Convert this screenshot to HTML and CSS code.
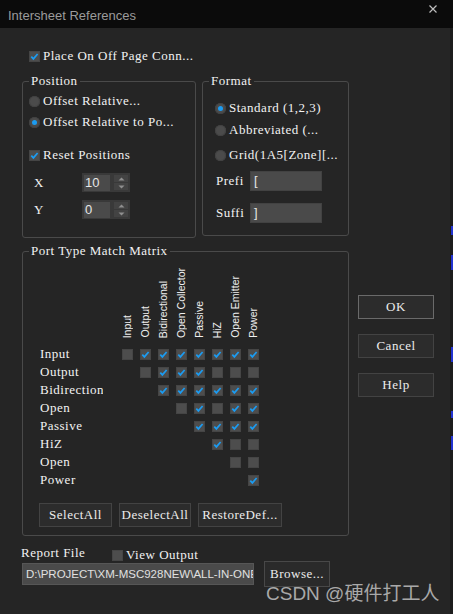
FILE: index.html
```html
<!DOCTYPE html>
<html>
<head>
<meta charset="utf-8">
<title>Intersheet References</title>
<link rel="stylesheet" href="styles.css">
</head>
<body>
<div class="screen">
  <div class="titlebar">
    <span class="title">Intersheet References</span>
    <svg class="close" viewBox="0 0 8 8"><path d="M0.5 0.5 L7.5 7.5 M7.5 0.5 L0.5 7.5" stroke="#bdbdbd" stroke-width="1.2" fill="none"/></svg>
  </div>
  <div class="below">
    <div class="window">
      <div class="content">
        <div class="check top-check"><span class="box on"></span><span>Place On Off Page Conn...</span></div>

        <div class="main">
          <div class="left">
            <div class="groups">
              <fieldset class="group pos">
                <legend>Position</legend>
                <div class="pos-inner">
                  <div class="check"><span class="radio"></span><span>Offset Relative...</span></div>
                  <div class="check gap7"><span class="radio on"></span><span>Offset Relative to Po...</span></div>
                  <div class="check gap19"><span class="box on"></span><span>Reset Positions</span></div>
                  <div class="spin-row gap11">
                    <span class="spin-label">X</span>
                    <div class="spin"><span class="spin-val">10</span><span class="spin-btns"><span class="spin-b"><svg viewBox="0 0 7 4"><path d="M0.5 3.5 L3.5 0.5 L6.5 3.5 Z" fill="#8f8f8f"/></svg></span><span class="spin-b"><svg viewBox="0 0 7 4"><path d="M0.5 0.5 L3.5 3.5 L6.5 0.5 Z" fill="#8f8f8f"/></svg></span></span></div>
                  </div>
                  <div class="spin-row gap8">
                    <span class="spin-label">Y</span>
                    <div class="spin"><span class="spin-val">0</span><span class="spin-btns"><span class="spin-b"><svg viewBox="0 0 7 4"><path d="M0.5 3.5 L3.5 0.5 L6.5 3.5 Z" fill="#8f8f8f"/></svg></span><span class="spin-b"><svg viewBox="0 0 7 4"><path d="M0.5 0.5 L3.5 3.5 L6.5 0.5 Z" fill="#8f8f8f"/></svg></span></span></div>
                  </div>
                </div>
              </fieldset>
              <fieldset class="group fmt">
                <legend>Format</legend>
                <div class="fmt-inner">
                  <div class="check"><span class="radio on"></span><span>Standard (1,2,3)</span></div>
                  <div class="check gap8"><span class="radio"></span><span>Abbreviated (...</span></div>
                  <div class="check gap11"><span class="radio"></span><span>Grid(1A5[Zone][...</span></div>
                  <div class="field-row gap9"><span class="field-label">Prefi</span><span class="field">[</span></div>
                  <div class="field-row gap12"><span class="field-label">Suffi</span><span class="field">]</span></div>
                </div>
              </fieldset>
            </div>

            <fieldset class="group matrix">
              <legend>Port Type Match Matrix</legend>
              <div class="grid">
                <div class="hd-empty"></div>
                <div class="hd"><span>Input</span></div>
                <div class="hd"><span>Output</span></div>
                <div class="hd"><span>Bidirectional</span></div>
                <div class="hd"><span>Open Collector</span></div>
                <div class="hd"><span>Passive</span></div>
                <div class="hd"><span>HiZ</span></div>
                <div class="hd"><span>Open Emitter</span></div>
                <div class="hd"><span>Power</span></div>

                <div class="rl">Input</div>
                <div class="cell"><span class="box"></span></div>
                <div class="cell"><span class="box on"></span></div>
                <div class="cell"><span class="box on"></span></div>
                <div class="cell"><span class="box on"></span></div>
                <div class="cell"><span class="box on"></span></div>
                <div class="cell"><span class="box on"></span></div>
                <div class="cell"><span class="box on"></span></div>
                <div class="cell"><span class="box on"></span></div>

                <div class="rl">Output</div>
                <div class="cell"></div>
                <div class="cell"><span class="box"></span></div>
                <div class="cell"><span class="box on"></span></div>
                <div class="cell"><span class="box on"></span></div>
                <div class="cell"><span class="box on"></span></div>
                <div class="cell"><span class="box"></span></div>
                <div class="cell"><span class="box"></span></div>
                <div class="cell"><span class="box"></span></div>

                <div class="rl">Bidirectional</div>
                <div class="cell"></div>
                <div class="cell"></div>
                <div class="cell"><span class="box on"></span></div>
                <div class="cell"><span class="box on"></span></div>
                <div class="cell"><span class="box on"></span></div>
                <div class="cell"><span class="box on"></span></div>
                <div class="cell"><span class="box on"></span></div>
                <div class="cell"><span class="box on"></span></div>

                <div class="rl">Open</div>
                <div class="cell"></div>
                <div class="cell"></div>
                <div class="cell"></div>
                <div class="cell"><span class="box"></span></div>
                <div class="cell"><span class="box on"></span></div>
                <div class="cell"><span class="box"></span></div>
                <div class="cell"><span class="box on"></span></div>
                <div class="cell"><span class="box on"></span></div>

                <div class="rl">Passive</div>
                <div class="cell"></div>
                <div class="cell"></div>
                <div class="cell"></div>
                <div class="cell"></div>
                <div class="cell"><span class="box on"></span></div>
                <div class="cell"><span class="box on"></span></div>
                <div class="cell"><span class="box on"></span></div>
                <div class="cell"><span class="box on"></span></div>

                <div class="rl">HiZ</div>
                <div class="cell"></div>
                <div class="cell"></div>
                <div class="cell"></div>
                <div class="cell"></div>
                <div class="cell"></div>
                <div class="cell"><span class="box on"></span></div>
                <div class="cell"><span class="box"></span></div>
                <div class="cell"><span class="box"></span></div>

                <div class="rl">Open</div>
                <div class="cell"></div>
                <div class="cell"></div>
                <div class="cell"></div>
                <div class="cell"></div>
                <div class="cell"></div>
                <div class="cell"></div>
                <div class="cell"><span class="box"></span></div>
                <div class="cell"><span class="box"></span></div>

                <div class="rl">Power</div>
                <div class="cell"></div>
                <div class="cell"></div>
                <div class="cell"></div>
                <div class="cell"></div>
                <div class="cell"></div>
                <div class="cell"></div>
                <div class="cell"></div>
                <div class="cell"><span class="box on"></span></div>
              </div>
              <div class="mx-buttons">
                <span class="btn b-sel">SelectAll</span>
                <span class="btn b-desel">DeselectAll</span>
                <span class="btn b-rest">RestoreDef...</span>
              </div>
            </fieldset>
          </div>

          <div class="right">
            <span class="btn dlg ok">OK</span>
            <span class="btn dlg">Cancel</span>
            <span class="btn dlg">Help</span>
          </div>
        </div>

        <div class="report">
          <div class="report-top">
            <span class="report-label">Report File</span>
            <div class="check view"><span class="box"></span><span>View Output</span></div>
          </div>
          <div class="report-bottom">
            <span class="path">D:\PROJECT\XM-MSC928NEW\ALL-IN-ONE\</span>
            <span class="btn browse">Browse...</span>
          </div>
        </div>
      </div>
      <div class="watermark">CSDN @硬件打工人</div>
    </div>
    <div class="edge"></div>
  </div>
</div>
</body>
</html>
```

FILE: styles.css
```css
html, body {
  margin: 0;
  padding: 0;
  background: #1c1c1c;
}

body {
  font-family: "Liberation Serif", "DejaVu Serif", serif;
  font-size: 13px;
  letter-spacing: 0.5px;
  color: #f2f2f2;
}

.screen {
  width: 453px;
  height: 614px;
  display: flex;
  flex-direction: column;
  overflow: hidden;
}

.titlebar {
  height: 28px;
  flex: none;
  background: #0b0b0b;
  display: flex;
  justify-content: space-between;
  align-items: flex-start;
}

.title {
  font: 13px/15px "Liberation Sans", Arial, sans-serif;
  letter-spacing: 0;
  color: #9b9b9b;
  margin: 8px 0 0 8px;
}

.close {
  width: 8px;
  height: 8px;
  margin: 5px 16px 0 0;
}

.below {
  flex: 1;
  display: flex;
}

.window {
  width: 450px;
  flex: none;
  background: #252525;
  position: relative;
}

.edge {
  flex: 1;
  background: linear-gradient(to right, #1d1d1d 0 1px, transparent 1px 3px),
    linear-gradient(to bottom,
    #1d1d1d 0 198px, #2233d0 198px 207px,
    #1d1d1d 207px 227px, #2233d0 227px 242px,
    #1d1d1d 242px 319px, #2233d0 319px 334px,
    #1d1d1d 334px 383px, #2233d0 383px 390px,
    #1d1d1d 390px 408px, #2233d0 408px 422px,
    #1d1d1d 422px);
}

.content {
  padding: 21px 0 0 22px;
}

/* checkboxes & radios */
.check {
  display: flex;
  align-items: center;
  gap: 3px;
  height: 14px;
  line-height: 14px;
  white-space: nowrap;
}

.top-check {
  margin-left: 7px;
}

.box {
  width: 11px;
  height: 11px;
  flex: none;
  background: #4d4d4d;
  box-shadow: inset 0 0 0 1px #454545;
}

.box.on {
  background: #4d4d4d url("data:image/svg+xml,%3Csvg xmlns='http://www.w3.org/2000/svg' viewBox='0 0 11 11'%3E%3Cpath d='M2.3 5.6 L4.4 7.9 L8.6 3' stroke='%231b9cf2' stroke-width='1.7' fill='none'/%3E%3C/svg%3E") center / 11px 11px no-repeat;
}

.radio {
  width: 11px;
  height: 11px;
  flex: none;
  border-radius: 50%;
  background: #4b4b4b;
  box-shadow: inset 0 0 0 1px #424242;
  display: flex;
  align-items: center;
  justify-content: center;
}

.radio.on::after {
  content: "";
  width: 5px;
  height: 5px;
  border-radius: 50%;
  background: #1b9cf2;
}

.gap7 { margin-top: 7px; }
.gap8 { margin-top: 8px; }
.gap9 { margin-top: 9px; }
.gap11 { margin-top: 11px; }
.gap12 { margin-top: 12px; }
.gap19 { margin-top: 19px; }

/* layout */
.main {
  display: grid;
  grid-template-columns: 327px 76px;
  column-gap: 9px;
  margin-top: 11px;
}

.groups {
  display: flex;
  gap: 6px;
  align-items: flex-start;
}

.group {
  box-sizing: border-box;
  margin: 0;
  padding: 0;
  border: 1px solid #4a4a4a;
  border-radius: 3px;
  min-width: 0;
}

.group legend {
  margin-left: 6px;
  padding: 0 2px;
  height: 14px;
  line-height: 14px;
  white-space: nowrap;
}

.pos {
  width: 174px;
  height: 164px;
}

.fmt {
  width: 147px;
  height: 162px;
}

.pos-inner {
  padding: 6px 0 0 6px;
}

.fmt-inner {
  padding: 13px 0 0 12px;
}

/* spinners */
.spin-row {
  display: flex;
  align-items: center;
  height: 19px;
}

.spin-label {
  margin-left: 5px;
  width: 48px;
  line-height: 14px;
}

.spin {
  box-sizing: border-box;
  width: 48px;
  height: 19px;
  background: #393939;
  padding: 2px 2px 1px 2px;
  display: flex;
  gap: 4px;
}

.spin-val {
  width: 26px;
  background: #4a4a4a;
  font: 13px/16px "Liberation Sans", Arial, sans-serif;
  letter-spacing: 0;
  color: #e6e6e6;
  padding-left: 1px;
  box-sizing: border-box;
}

.spin-btns {
  width: 14px;
  display: flex;
  flex-direction: column;
  justify-content: space-between;
  padding: 0 0 1px 0;
}

.spin-b {
  height: 7px;
  background: #434343;
  display: flex;
  align-items: center;
  justify-content: center;
}

.spin-b svg {
  width: 7px;
  height: 4px;
}

/* text fields */
.field-row {
  display: flex;
  align-items: center;
  height: 20px;
}

.field-label {
  width: 34px;
  margin-left: 1px;
  line-height: 14px;
}

.field {
  box-sizing: border-box;
  width: 72px;
  height: 20px;
  background: #4a4a4a;
  border: 1px solid #424242;
  font: 13px/18px "Liberation Sans", Arial, sans-serif;
  letter-spacing: 0;
  color: #e6e6e6;
  padding-left: 3px;
}

/* matrix */
.matrix {
  width: 327px;
  height: 292px;
  margin-top: 6px;
}

.grid {
  display: grid;
  grid-template-columns: 78px repeat(8, 18px);
  grid-template-rows: 87px repeat(8, 18px);
  padding-left: 17px;
}

.hd {
  display: flex;
  align-items: flex-end;
  justify-content: center;
  padding-bottom: 7px;
}

.hd span {
  writing-mode: vertical-rl;
  transform: rotate(180deg);
  font: 10.5px/12px "Liberation Sans", Arial, sans-serif;
  letter-spacing: 0;
  color: #f0f0f0;
  white-space: nowrap;
}

.rl {
  width: 63px;
  overflow: hidden;
  white-space: nowrap;
  line-height: 18px;
}

.cell {
  display: flex;
  align-items: center;
  justify-content: center;
}

.mx-buttons {
  display: flex;
  gap: 7px;
  margin: 14px 0 0 16px;
}

.btn {
  box-sizing: border-box;
  height: 24px;
  background: #2c2c2c;
  border: 1px solid #434343;
  color: #ececec;
  line-height: 22px;
  text-align: center;
  white-space: nowrap;
}

.b-sel { width: 73px; }
.b-desel { width: 72px; }
.b-rest { width: 84px; }

.right {
  display: flex;
  flex-direction: column;
  gap: 15px;
  padding-top: 221px;
}

.dlg {
  width: 76px;
}

.dlg.ok {
  border-color: #6a6a6a;
}

/* report */
.report {
  margin: 10px 0 0 -1px;
}

.report-top {
  display: flex;
  height: 16px;
}

.report-label {
  width: 91px;
  line-height: 14px;
  align-self: flex-start;
}

.view {
  align-self: flex-end;
}

.report-bottom {
  display: flex;
  align-items: center;
  gap: 10px;
  margin-top: -1px;
  padding-left: 1px;
}

.path {
  box-sizing: border-box;
  width: 232px;
  height: 22px;
  background: #4a4a4a;
  border: 1px solid #565656;
  font: 11.5px/20px "Liberation Sans", Arial, sans-serif;
  letter-spacing: 0;
  color: #e0e0e0;
  padding-left: 3px;
  overflow: hidden;
  white-space: nowrap;
}

.browse {
  width: 66px;
  height: 26px;
  line-height: 24px;
  background: #2a2a2a;
  border-color: #484848;
}

.watermark {
  position: absolute;
  left: 266px;
  top: 555px;
  font: 19px/22px "Liberation Sans", "Noto Sans CJK SC", sans-serif;
  letter-spacing: 0;
  color: #a9a9a9;
  white-space: nowrap;
}
```
